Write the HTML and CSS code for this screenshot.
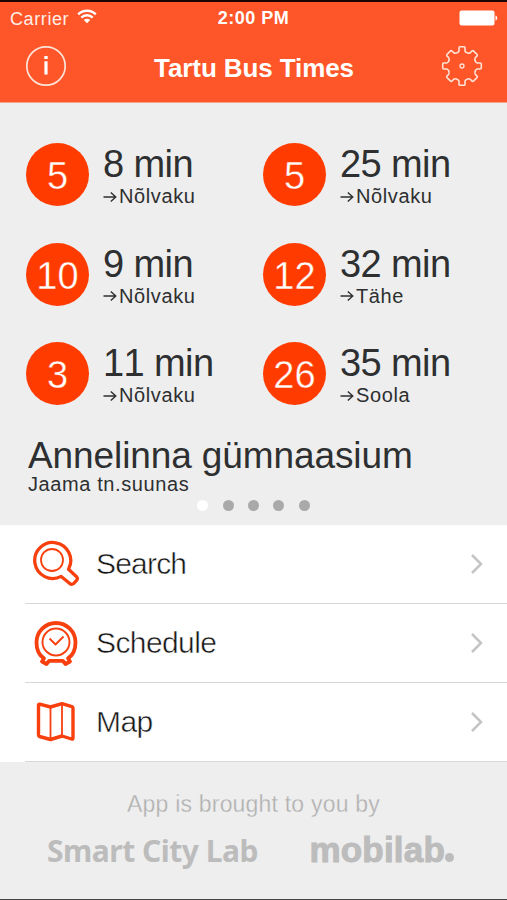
FILE: index.html
```
<!DOCTYPE html>
<html lang="en">
<head>
    <meta charset="UTF-8">
    <meta name="viewport" content="width=device-width, initial-scale=1.0">
    <title>Tartu Bus Times</title>
    <link rel="stylesheet" href="styles.css">
</head>
<body>
    <div class="app">
        <header class="header">
            <div class="status-bar">
                <div class="carrier">
                    <span>Carrier</span>
                    <svg width="20" height="15" viewBox="0 0 20 15" fill="none" stroke="#fff" stroke-width="2.4">
                        <path d="M1.2 5.4a12.4 12.4 0 0 1 17.6 0"/>
                        <path d="M4.3 8.7a8 8 0 0 1 11.4 0"/>
                        <path d="M10 14.3l-3.2-3.2a4.5 4.5 0 0 1 6.4 0z" fill="#fff" stroke="none"/>
                    </svg>
                </div>
                <div class="clock">2:00 PM</div>
                <svg class="battery" width="39" height="16" viewBox="0 0 39 16" fill="#fff">
                    <rect x="0.5" y="0.5" width="35" height="15" rx="2"/>
                    <path d="M36.5 5.5c2.3.4 2.3 4.6 0 5z"/>
                </svg>
            </div>
            <div class="nav-bar">
                <svg width="42" height="42" viewBox="0 0 42 42" fill="none" stroke="#ffe3d8" stroke-width="1.7">
                    <circle cx="21" cy="21" r="19.2"/>
                    <path d="M21 16.3v13.2" stroke="#fff" stroke-width="3.2"/>
                    <path d="M21 11v3" stroke="#fff" stroke-width="3.4"/>
                </svg>
                <h1>Tartu Bus Times</h1>
                <svg width="42" height="42" viewBox="-21 -21 42 42" fill="none" stroke="#ffe3d8" stroke-width="1.6" stroke-linejoin="round">
                    <path d="M-3-18.2Q-3-19.3-2-19.3H2Q3-19.3 3-18.2V-15.2Q3.2-14 4.5-13.5Q6.7-12.3 8.2-13.2L10.1-15.1Q10.9-15.7 11.7-14.9L14.9-11.7Q15.7-10.9 15.1-10.1L13.2-8.2Q12.3-6.7 13.5-4.5Q14-3.2 15.2-3H18.2Q19.3-3 19.3-2V2Q19.3 3 18.2 3H15.2Q14 3.2 13.5 4.5Q12.3 6.7 13.2 8.2L15.1 10.1Q15.7 10.9 14.9 11.7L11.7 14.9Q10.9 15.7 10.1 15.1L8.2 13.2Q6.7 12.3 4.5 13.5Q3.2 14 3 15.2V18.2Q3 19.3 2 19.3H-2Q-3 19.3-3 18.2V15.2Q-3.2 14-4.5 13.5Q-6.7 12.3-8.2 13.2L-10.1 15.1Q-10.9 15.7-11.7 14.9L-14.9 11.7Q-15.7 10.9-15.1 10.1L-13.2 8.2Q-12.3 6.7-13.5 4.5Q-14 3.2-15.2 3H-18.2Q-19.3 3-19.3 2V-2Q-19.3-3-18.2-3H-15.2Q-14-3.2-13.5-4.5Q-12.3-6.7-13.2-8.2L-15.1-10.1Q-15.7-10.9-14.9-11.7L-11.7-14.9Q-10.9-15.7-10.1-15.1L-8.2-13.2Q-6.7-12.3-4.5-13.5Q-3.2-14-3-15.2Z"/>
                    <circle r="2" stroke-width="1.3"/>
                </svg>
            </div>
        </header>

        <section class="stop">
            <div class="departures">
                <div class="departure">
                    <div class="line">5</div>
                    <div>
                        <div class="time">8 min</div>
                        <div class="direction"><svg class="arrow" viewBox="0 0 14 12"><path d="M0.5 6H12.5M7.8 1.4L12.8 6L7.8 10.6"/></svg>Nõlvaku</div>
                    </div>
                </div>
                <div class="departure">
                    <div class="line">5</div>
                    <div>
                        <div class="time">25 min</div>
                        <div class="direction"><svg class="arrow" viewBox="0 0 14 12"><path d="M0.5 6H12.5M7.8 1.4L12.8 6L7.8 10.6"/></svg>Nõlvaku</div>
                    </div>
                </div>
                <div class="departure">
                    <div class="line">10</div>
                    <div>
                        <div class="time">9 min</div>
                        <div class="direction"><svg class="arrow" viewBox="0 0 14 12"><path d="M0.5 6H12.5M7.8 1.4L12.8 6L7.8 10.6"/></svg>Nõlvaku</div>
                    </div>
                </div>
                <div class="departure">
                    <div class="line">12</div>
                    <div>
                        <div class="time">32 min</div>
                        <div class="direction"><svg class="arrow" viewBox="0 0 14 12"><path d="M0.5 6H12.5M7.8 1.4L12.8 6L7.8 10.6"/></svg>Tähe</div>
                    </div>
                </div>
                <div class="departure">
                    <div class="line">3</div>
                    <div>
                        <div class="time">11 min</div>
                        <div class="direction"><svg class="arrow" viewBox="0 0 14 12"><path d="M0.5 6H12.5M7.8 1.4L12.8 6L7.8 10.6"/></svg>Nõlvaku</div>
                    </div>
                </div>
                <div class="departure">
                    <div class="line">26</div>
                    <div>
                        <div class="time">35 min</div>
                        <div class="direction"><svg class="arrow" viewBox="0 0 14 12"><path d="M0.5 6H12.5M7.8 1.4L12.8 6L7.8 10.6"/></svg>Soola</div>
                    </div>
                </div>
            </div>
            <h2>Annelinna gümnaasium</h2>
            <p class="towards">Jaama tn.suunas</p>
            <div class="pages">
                <span class="page active"></span>
                <span class="page"></span>
                <span class="page"></span>
                <span class="page"></span>
                <span class="page"></span>
            </div>
        </section>

        <nav class="menu">
            <a class="menu-item">
                <svg class="menu-icon" viewBox="0 0 50 50">
                    <path d="M31.2 37.4A18 18 0 1 1 38.5 30.2L46.6 37.8Q48.3 39.7 46.4 41.7L44 44.2Q41.8 46 39.8 44.6Z" stroke-width="3.3"/>
                    <circle cx="22" cy="21" r="11" stroke-width="1.8"/>
                </svg>
                <span class="label">Search</span>
                <svg class="chevron" viewBox="0 0 14 22"><path d="M2 2l9 9-9 9"/></svg>
            </a>
            <a class="menu-item">
                <svg class="menu-icon" viewBox="0 0 50 50">
                    <path d="M14 40.3C9.5 37.5 6.5 31.5 6.5 24.5a19.5 19.5 0 0 1 39 0C45.5 31.5 42.5 37.5 38 40.3L40 43.5L35.5 46L32.8 42.8H19.2L16.5 46L12 43.5Z" stroke-width="3.8"/>
                    <circle cx="26" cy="24" r="13.5" stroke-width="1.9"/>
                    <path d="M19.5 20.5L25.5 26.5L33.5 18.5" stroke-width="1.9"/>
                </svg>
                <span class="label wide">Schedule</span>
                <svg class="chevron" viewBox="0 0 14 22"><path d="M2 2l9 9-9 9"/></svg>
            </a>
            <a class="menu-item">
                <svg class="menu-icon" viewBox="0 0 50 50">
                    <path d="M8.5 8.2Q8.5 7 9.7 7.2L20.5 10L32 6.7L42 9.7Q43 10 43 11.5V41Q43 42.5 41.5 42L32 39L20.5 42.5L9.5 39.5Q8.5 39 8.5 37.5Z" stroke-width="3.4"/>
                    <path d="M20.5 10V42M32 7V39" stroke-width="1.8"/>
                </svg>
                <span class="label wide">Map</span>
                <svg class="chevron" viewBox="0 0 14 22"><path d="M2 2l9 9-9 9"/></svg>
            </a>
        </nav>

        <footer class="footer">
            <p>App is brought to you by</p>
            <div class="logos">
                <span class="smart-city">Smart City Lab</span>
                <span class="mobilab">mobilab<i></i></span>
            </div>
        </footer>
    </div>
</body>
</html>
```
FILE: styles.css
```
* {
    box-sizing: border-box;
}

body {
    margin: 0;
    background: #eeeeee;
    color: #2d2f30;
    font-family: "Liberation Sans", Arial, sans-serif;
}

h1, h2, p {
    margin: 0;
    font-weight: normal;
}

svg {
    display: block;
    flex: none;
}

.app {
    display: flex;
    flex-direction: column;
    height: 900px;
    overflow: hidden;
    border-top: 2px solid #1a0300;
    border-bottom: 1px solid #444;
}

/* Header */
.header {
    height: 101px;
    background: #ff5629;
    color: #fff;
    border-bottom: 1px solid #f3a48c;
}

.status-bar {
    display: grid;
    grid-template-columns: 1fr auto 1fr;
    align-items: center;
    height: 33px;
    padding: 0 9px 0 10px;
    font-size: 18px;
}

.carrier {
    display: flex;
    align-items: center;
    gap: 8px;
    padding-top: 1px;
    letter-spacing: 0.6px;
    color: #ffeee8;
}

.carrier svg {
    margin-top: -5px;
}

.clock {
    padding-right: 1px;
    font-weight: bold;
    letter-spacing: 0.5px;
}

.battery {
    justify-self: end;
    margin-top: -2px;
}

.nav-bar {
    display: flex;
    align-items: center;
    justify-content: space-between;
    padding: 10px 24px 0 25px;
}

.nav-bar h1 {
    padding-top: 4px;
    font-size: 26px;
    line-height: 30px;
    font-weight: bold;
    letter-spacing: -0.1px;
}

/* Departures */
.stop {
    height: 422px;
    padding: 40px 0 0 26px;
}

.departures {
    display: grid;
    grid-template-columns: 237px 1fr;
    grid-auto-rows: 99.5px;
}

.departure {
    display: flex;
    gap: 14px;
}

.line {
    width: 63px;
    height: 63px;
    padding-top: 1px;
    border-radius: 50%;
    background: #ff3b00;
    color: #fff;
    font-size: 38px;
    line-height: 64px;
    text-align: center;
    -webkit-text-stroke: 0.4px #ff3b00;
}

.time {
    height: 42px;
    font-size: 38px;
    line-height: 43px;
    letter-spacing: -0.6px;
    font-kerning: none;
}

.direction {
    display: flex;
    align-items: center;
    font-size: 20px;
    line-height: 23px;
    letter-spacing: 0.6px;
}

.arrow {
    width: 14px;
    height: 12px;
    margin-right: 2px;
    fill: none;
    stroke: #2d2f30;
    stroke-width: 1.4;
}

.stop h2 {
    margin: -4px 0 0 2px;
    font-size: 37px;
    line-height: 35px;
    letter-spacing: -0.1px;
}

.towards {
    margin-left: 2px;
    font-size: 20px;
    line-height: 22px;
    letter-spacing: 0.6px;
}

.pages {
    display: flex;
    justify-content: center;
    gap: 14.4px;
    margin: 5px 0 0 -26px;
}

.page {
    width: 11px;
    height: 11px;
    border-radius: 50%;
    background: #a9a9a9;
}

.page.active {
    background: #fff;
}

/* Menu */
.menu {
    background: linear-gradient(to right, #fff 25px, #d8d8d8 25px);
}

.menu-item {
    display: flex;
    align-items: center;
    height: 78px;
    margin-bottom: 1px;
    padding: 0 23px 0 30px;
    background: #fff;
    color: #161616;
}

.menu-icon {
    width: 50px;
    height: 50px;
    margin-right: 16px;
    fill: none;
    stroke: #f8400f;
    stroke-linejoin: round;
}

.label {
    flex: 1;
    font-size: 30px;
    letter-spacing: -0.8px;
    -webkit-text-stroke: 0.5px #fff;
}

.label.wide {
    letter-spacing: -0.6px;
}

.chevron {
    width: 14px;
    height: 22px;
    fill: none;
    stroke: #c4c4c4;
    stroke-width: 2.5;
}

/* Footer */
.footer {
    flex: 1;
    padding-top: 28px;
    text-align: center;
    color: #b0b0b0;
}

.footer p {
    font-size: 23px;
    line-height: 28px;
    letter-spacing: 0.2px;
    -webkit-text-stroke: 0.3px #eee;
}

.logos {
    display: flex;
    align-items: baseline;
    justify-content: space-between;
    padding: 12px 53px 0 47px;
    color: #bcbcbc;
    font-weight: bold;
}

.smart-city {
    font-family: "Noto Sans", sans-serif;
    font-size: 30px;
    line-height: 40px;
    letter-spacing: -0.5px;
}

.mobilab {
    font-size: 35px;
    letter-spacing: 0.2px;
    -webkit-text-stroke: 1px #bcbcbc;
}

.mobilab i {
    display: inline-block;
    width: 9px;
    height: 9px;
    border-radius: 50%;
    background: #bcbcbc;
}
```
